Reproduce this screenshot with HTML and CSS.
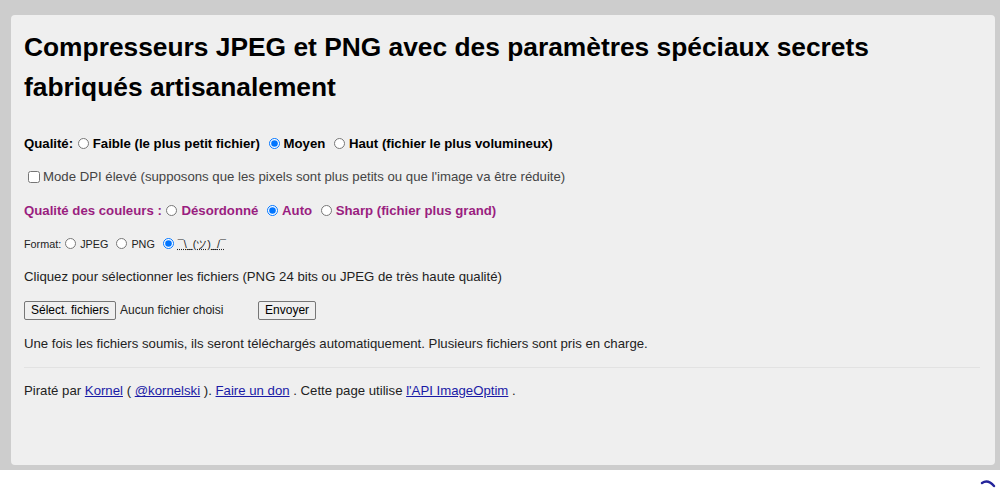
FILE: index.html
```
<!DOCTYPE html>
<html>
<head>
    <meta charset="utf-8">
    <title>Compresseurs JPEG et PNG</title>
    <link rel="stylesheet" href="styles.css">
</head>
<body>
    <div class="page">
        <form class="card">
            <h1>Compresseurs JPEG et PNG avec des paramètres spéciaux secrets fabriqués artisanalement</h1>

            <p class="quality">Qualité:
                <label><input type="radio" name="q" value="low">Faible (le plus petit fichier)</label>
                <label><input type="radio" name="q" value="mid" checked>Moyen</label>
                <label><input type="radio" name="q" value="high">Haut (fichier le plus volumineux)</label>
            </p>

            <p class="dpi">
                <label><input type="checkbox" name="dpi">Mode DPI élevé (supposons que les pixels sont plus petits ou que l'image va être réduite)</label>
            </p>

            <p class="colors">Qualité des couleurs :
                <label><input type="radio" name="c" value="dither">Désordonné</label>
                <label><input type="radio" name="c" value="auto" checked>Auto</label>
                <label><input type="radio" name="c" value="sharp">Sharp (fichier plus grand)</label>
            </p>

            <p class="format">Format:
                <label><input type="radio" name="f" value="jpeg">JPEG</label>
                <label><input type="radio" name="f" value="png">PNG</label>
                <label><input type="radio" name="f" value="auto" checked><abbr title="auto">¯\_(ツ)_/¯</abbr></label>
            </p>

            <p>Cliquez pour sélectionner les fichiers (PNG 24 bits ou JPEG de très haute qualité)</p>

            <p class="files">
                <button type="button" class="btn">Sélect. fichiers</button>
                <span class="nofile">Aucun fichier choisi</span>
                <button type="button" class="btn">Envoyer</button>
            </p>

            <p>Une fois les fichiers soumis, ils seront téléchargés automatiquement. Plusieurs fichiers sont pris en charge.</p>

            <hr>

            <p>Piraté par <a href="#">Kornel</a> ( <a href="#">@kornelski</a> ). <a href="#">Faire un don</a> . Cette page utilise <a href="#">l'API ImageOptim</a> .</p>
        </form>
    </div>

    <svg class="spinner" width="20" height="10" viewBox="0 0 20 10">
        <path d="M4 5 Q 10 1 16 8" fill="none" stroke="#23239a" stroke-width="2.4" stroke-linecap="round"/>
    </svg>
</body>
</html>
```

FILE: styles.css
```
html {
    background: #fff;
}
body {
    margin: 0;
    font-family: "Liberation Sans", Arial, sans-serif;
    font-size: 13.2px;
    color: #222;
}
.page {
    background: #cdcdcd;
    padding: 15px 5px 5px 11px;
}
.card {
    display: block;
    box-sizing: border-box;
    min-height: 450px;
    background: #efefef;
    border-radius: 4px;
    padding: 12px 15px 20px 13px;
}
h1 {
    margin: 0 0 27px;
    font-size: 26.35px;
    line-height: 40px;
    color: #000;
}
p {
    margin: 13.3px 0;
    line-height: 20px;
    height: 20px;
}
label + label {
    margin-left: 4px;
}
input[type=radio] {
    width: 11px;
    height: 11px;
    margin: 0 4px 0 1px;
    vertical-align: -1px;
}
input[type=checkbox] {
    width: 12px;
    height: 12px;
    margin: 0 3px 0 4px;
    vertical-align: -2px;
}
.quality {
    font-weight: bold;
    color: #000;
}
.dpi {
    color: #444;
}
.colors {
    font-weight: bold;
    color: #9a1e80;
}
.format {
    font-size: 10.8px;
}
abbr {
    text-decoration: underline dotted;
}
.files {
    display: flex;
    align-items: center;
    font-size: 12px;
}
.btn {
    font-family: "Liberation Sans", Arial, sans-serif;
    font-size: 12px;
    line-height: 15px;
    color: #000;
    background: #efefef;
    border: 1px solid #767676;
    border-radius: 2px;
    padding: 1px 6px;
}
.nofile {
    box-sizing: border-box;
    width: 142px;
    padding-left: 4px;
}
hr {
    border: 0;
    border-top: 1px solid #e2e2e2;
    margin: 13px 0 12px;
}
a {
    color: #1a1aa6;
}
.spinner {
    position: fixed;
    right: 2px;
    bottom: 0;
}
```
